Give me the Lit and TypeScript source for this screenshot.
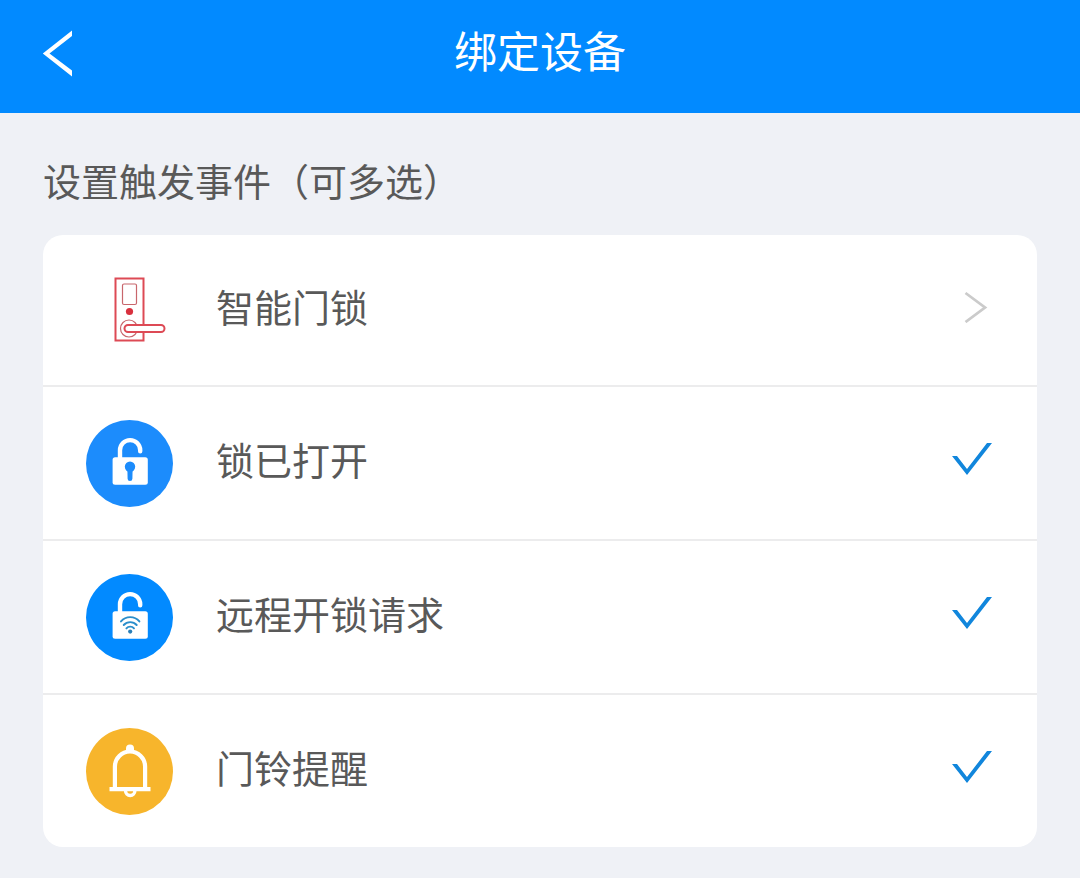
import { LitElement, html, css, svg, type TemplateResult } from "lit";
import { customElement, property, state } from "lit/decorators.js";

type EventId = "opened" | "remote" | "doorbell";

interface TriggerEvent {
  id: EventId;
  name: string;
  selected: boolean;
}

const lockBody = svg`
  <path d="M34 38V30.200a10.100 10.100 0 0 1 20.200 0v1"
    fill="none" stroke="#fff" stroke-width="4.400" stroke-linecap="round" />
  <rect x="26.600" y="37.200" width="35.200" height="27.500" rx="2.500" fill="#fff" />
`;

const eventIcons: Record<EventId, TemplateResult> = {
  opened: html`
    <svg class="icon" viewBox="0 0 87 87" aria-hidden="true">
      <circle cx="43.5" cy="43.5" r="43.5" fill="#1c8cfc" />
      ${lockBody}
      <circle cx="44" cy="46.800" r="5.200" fill="#1c8cfc" />
      <path d="M41.400 49.500h5.200l-.2 9.200a2.400 2.400 0 0 1-4.800 0z" fill="#1c8cfc" />
    </svg>
  `,
  remote: html`
    <svg class="icon" viewBox="0 0 87 87" aria-hidden="true">
      <circle cx="43.5" cy="43.5" r="43.5" fill="#028aff" />
      ${lockBody}
      <g fill="none" stroke="#2a8ecb" stroke-width="1.900" stroke-linecap="round">
        <path d="M35 47.400a12 12 0 0 1 18.400 0" />
        <path d="M37.700 51a8.700 8.700 0 0 1 13 0" />
        <path d="M40.400 54.400a5 5 0 0 1 7.600 0" />
      </g>
      <circle cx="44.200" cy="57.600" r="2.100" fill="#2a7fb8" />
    </svg>
  `,
  doorbell: html`
    <svg class="icon" viewBox="0 0 87 87" aria-hidden="true">
      <circle cx="43.5" cy="43.5" r="43.5" fill="#f7b52c" />
      <g fill="none" stroke="#fff" stroke-width="4.200">
        <path d="M28.900 60V38.600a15.100 15.100 0 0 1 30.200 0V60" />
        <path d="M23.500 61.200h41" />
        <path d="M39.500 62.500a4.700 5 0 0 0 9.400 0" stroke-width="3.400" />
      </g>
      <path d="M40 24v-3.500a4 4 0 0 1 8 0v3.500z" fill="#fff" />
    </svg>
  `,
};

@customElement("event-row")
export class EventRow extends LitElement {
  @property({ type: String }) kind: EventId = "opened";
  @property({ type: String }) name = "";
  @property({ type: Boolean }) selected = false;

  static styles = css`
    :host {
      display: block;
      border-top: 2px solid #ececed;
    }
    .row {
      display: grid;
      grid-template-columns: 87px 1fr auto;
      column-gap: 43px;
      align-items: center;
      min-height: 152px;
      padding: 0 45px 0 43px;
      box-sizing: border-box;
      cursor: pointer;
    }
    .icon {
      display: block;
      width: 87px;
      height: 87px;
    }
    .name {
      padding-bottom: 8px;
    }
    .tick {
      appearance: none;
      width: 40px;
      height: 32px;
      margin: 0 0 8px;
      cursor: pointer;
      clip-path: polygon(0 13px, 5px 13px, 15px 26px, 35px 0, 40px 0, 15px 32px);
    }
    .tick:checked {
      background: #1186dc;
    }
  `;

  private onChange(e: Event) {
    const selected = (e.target as HTMLInputElement).checked;
    this.dispatchEvent(new CustomEvent("toggle-event", { detail: { id: this.kind, selected } }));
  }

  render() {
    return html`
      <label class="row">
        ${eventIcons[this.kind]}
        <span class="name">${this.name}</span>
        <input class="tick" type="checkbox" .checked=${this.selected} @change=${this.onChange} />
      </label>
    `;
  }
}

@customElement("app-root")
export class AppRoot extends LitElement {
  @state() private events: TriggerEvent[] = [
    { id: "opened", name: "锁已打开", selected: true },
    { id: "remote", name: "远程开锁请求", selected: true },
    { id: "doorbell", name: "门铃提醒", selected: true },
  ];

  static styles = css`
    :host {
      display: block;
      min-height: 100vh;
      box-sizing: border-box;
      background: #eff1f6;
      color: #595959;
      font-family: "Noto Sans CJK SC", sans-serif;
      font-size: 38px;
      line-height: 56px;
    }
    .bar {
      display: grid;
      grid-template-columns: 116px 1fr 116px;
      align-items: center;
      height: 113px;
      padding-bottom: 8px;
      box-sizing: border-box;
      background: #028aff;
      color: #fff;
    }
    .back {
      display: flex;
      align-items: center;
      width: 116px;
      height: 96px;
      padding: 0 0 0 42px;
      border: 0;
      background: none;
      color: inherit;
      cursor: pointer;
    }
    .back-icon {
      width: 32px;
      height: 48px;
    }
    .title {
      margin: 0;
      padding-bottom: 8px;
      font-size: 43px;
      font-weight: 400;
      line-height: 64px;
      text-align: center;
    }
    .content {
      padding: 39px 43px 32px;
    }
    .heading {
      margin: 0 0 27px;
      font-size: 38px;
      font-weight: 400;
    }
    .card {
      border-radius: 20px;
      background: #fff;
      overflow: hidden;
    }
    .device {
      display: grid;
      grid-template-columns: 87px 1fr auto;
      column-gap: 43px;
      align-items: center;
      min-height: 150px;
      padding: 0 49px 0 43px;
      box-sizing: border-box;
      color: inherit;
      text-decoration: none;
    }
    .device-name {
      padding-bottom: 8px;
    }
    .device-icon {
      display: block;
      width: 87px;
      height: 87px;
    }
    .chevron {
      display: block;
      width: 24px;
      height: 32px;
      margin-bottom: 6px;
    }
  `;

  private onToggle(e: CustomEvent<{ id: EventId; selected: boolean }>) {
    const { id, selected } = e.detail;
    this.events = this.events.map((ev) => (ev.id === id ? { ...ev, selected } : ev));
  }

  render() {
    return html`
      <header class="bar">
        <button class="back" type="button" aria-label="返回">
          <svg class="back-icon" viewBox="0 0 32 48" aria-hidden="true">
            <path d="M30 1.500V7L7.500 24.500L30 41.500V47.500L.8 24.500Z" fill="#fff" />
          </svg>
        </button>
        <h1 class="title">绑定设备</h1>
      </header>
      <main class="content">
        <h2 class="heading">设置触发事件（可多选）</h2>
        <div class="card">
          <a class="device" href="#device">
            <svg class="device-icon" viewBox="0 0 87 87" aria-hidden="true">
              <g fill="none" stroke="#dd4a55">
                <rect x="29.500" y="11.500" width="28" height="62" stroke-width="2" />
                <rect x="36.500" y="17" width="14" height="20.500" rx="1.500" stroke="#c8666c" stroke-width="1.200" />
                <circle cx="43" cy="61.500" r="8.500" stroke="#c8666c" stroke-width="1.200" />
                <rect x="38.500" y="58" width="40" height="7" rx="3.500" fill="#fff" stroke-width="2" />
              </g>
              <circle cx="43.500" cy="44.500" r="3.600" fill="#d8303e" />
            </svg>
            <span class="device-name">智能门锁</span>
            <svg class="chevron" viewBox="0 0 24 32" aria-hidden="true">
              <path d="M1.500 2L21 16.500L1.500 31" fill="none" stroke="#cbcbcb" stroke-width="2.800" />
            </svg>
          </a>
          ${this.events.map(
            (ev) => html`
              <event-row
                .kind=${ev.id}
                .name=${ev.name}
                .selected=${ev.selected}
                @toggle-event=${this.onToggle}
              ></event-row>
            `,
          )}
        </div>
      </main>
    `;
  }
}
